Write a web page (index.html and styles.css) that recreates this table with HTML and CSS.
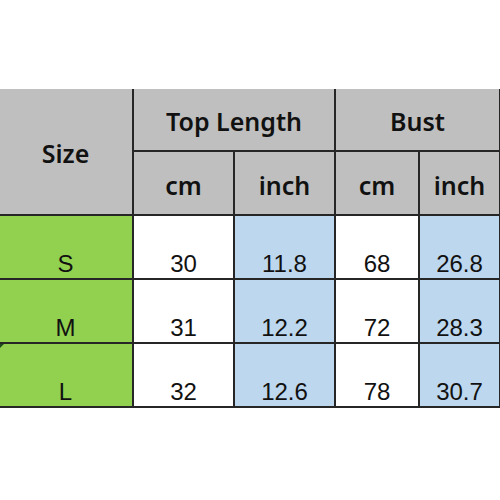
FILE: index.html
```html
<!DOCTYPE html>
<html>
<head>
<meta charset="utf-8">
<link rel="stylesheet" href="styles.css">
</head>
<body>
<table class="size-table">
  <colgroup>
    <col class="c-size"><col class="c-cm"><col class="c-inch"><col class="c-cm2"><col class="c-inch2">
  </colgroup>
  <tr class="h1">
    <th class="hd size-hd" rowspan="2">Size</th>
    <th class="hd" colspan="2">Top Length</th>
    <th class="hd" colspan="2">Bust</th>
  </tr>
  <tr class="h2">
    <th class="hd">cm</th>
    <th class="hd">inch</th>
    <th class="hd">cm</th>
    <th class="hd">inch</th>
  </tr>
  <tr class="row">
    <td class="sz">S</td><td>30</td><td class="blue">11.8</td><td>68</td><td class="blue">26.8</td>
  </tr>
  <tr class="row">
    <td class="sz">M</td><td>31</td><td class="blue">12.2</td><td>72</td><td class="blue">28.3</td>
  </tr>
  <tr class="row">
    <td class="sz marked">L<span class="marker"></span></td><td>32</td><td class="blue">12.6</td><td>78</td><td class="blue">30.7</td>
  </tr>
</table>
</body>
</html>
```
FILE: styles.css
```css
html, body {
  margin: 0;
  padding: 0;
  background: #ffffff;
}
body {
  padding-top: 89px;
  width: 500px;
  height: 411px;
  overflow: hidden;
}
.size-table {
  border-collapse: collapse;
  table-layout: fixed;
  width: 500px;
  margin-left: -1px;
}
.c-size { width: 134px; }
.c-cm { width: 101px; }
.c-inch { width: 101px; }
.c-cm2 { width: 84px; }
.c-inch2 { width: 81px; }
th, td {
  border: 2px solid #262626;
  padding: 0;
  text-align: center;
}
.hd {
  background: #bfbfbf;
  font-family: "Noto Sans", "Liberation Sans", sans-serif;
  font-weight: 600;
  font-size: 25px;
  color: #111;
  vertical-align: middle;
}
.h1 .hd { border-top: none; }
.size-hd { border-left: none; }
.h1 { height: 62px; }
.h1 .hd { padding-top: 2px; }
.h2 { height: 64px; }
.h2 .hd { padding-top: 4px; }
.row { height: 64px; }
td {
  font-family: "Liberation Sans", Arial, sans-serif;
  font-size: 24px;
  color: #111;
  vertical-align: bottom;
  padding-bottom: 0;
  background: #ffffff;
}
td.sz {
  background: #92d050;
  border-left: none;
  position: relative;
}
td.blue { background: #bdd7ee; }
.marker {
  position: absolute;
  left: 0;
  top: 0;
  width: 0;
  height: 0;
  border-top: 5px solid #1d4d1d;
  border-right: 5px solid transparent;
}
```
